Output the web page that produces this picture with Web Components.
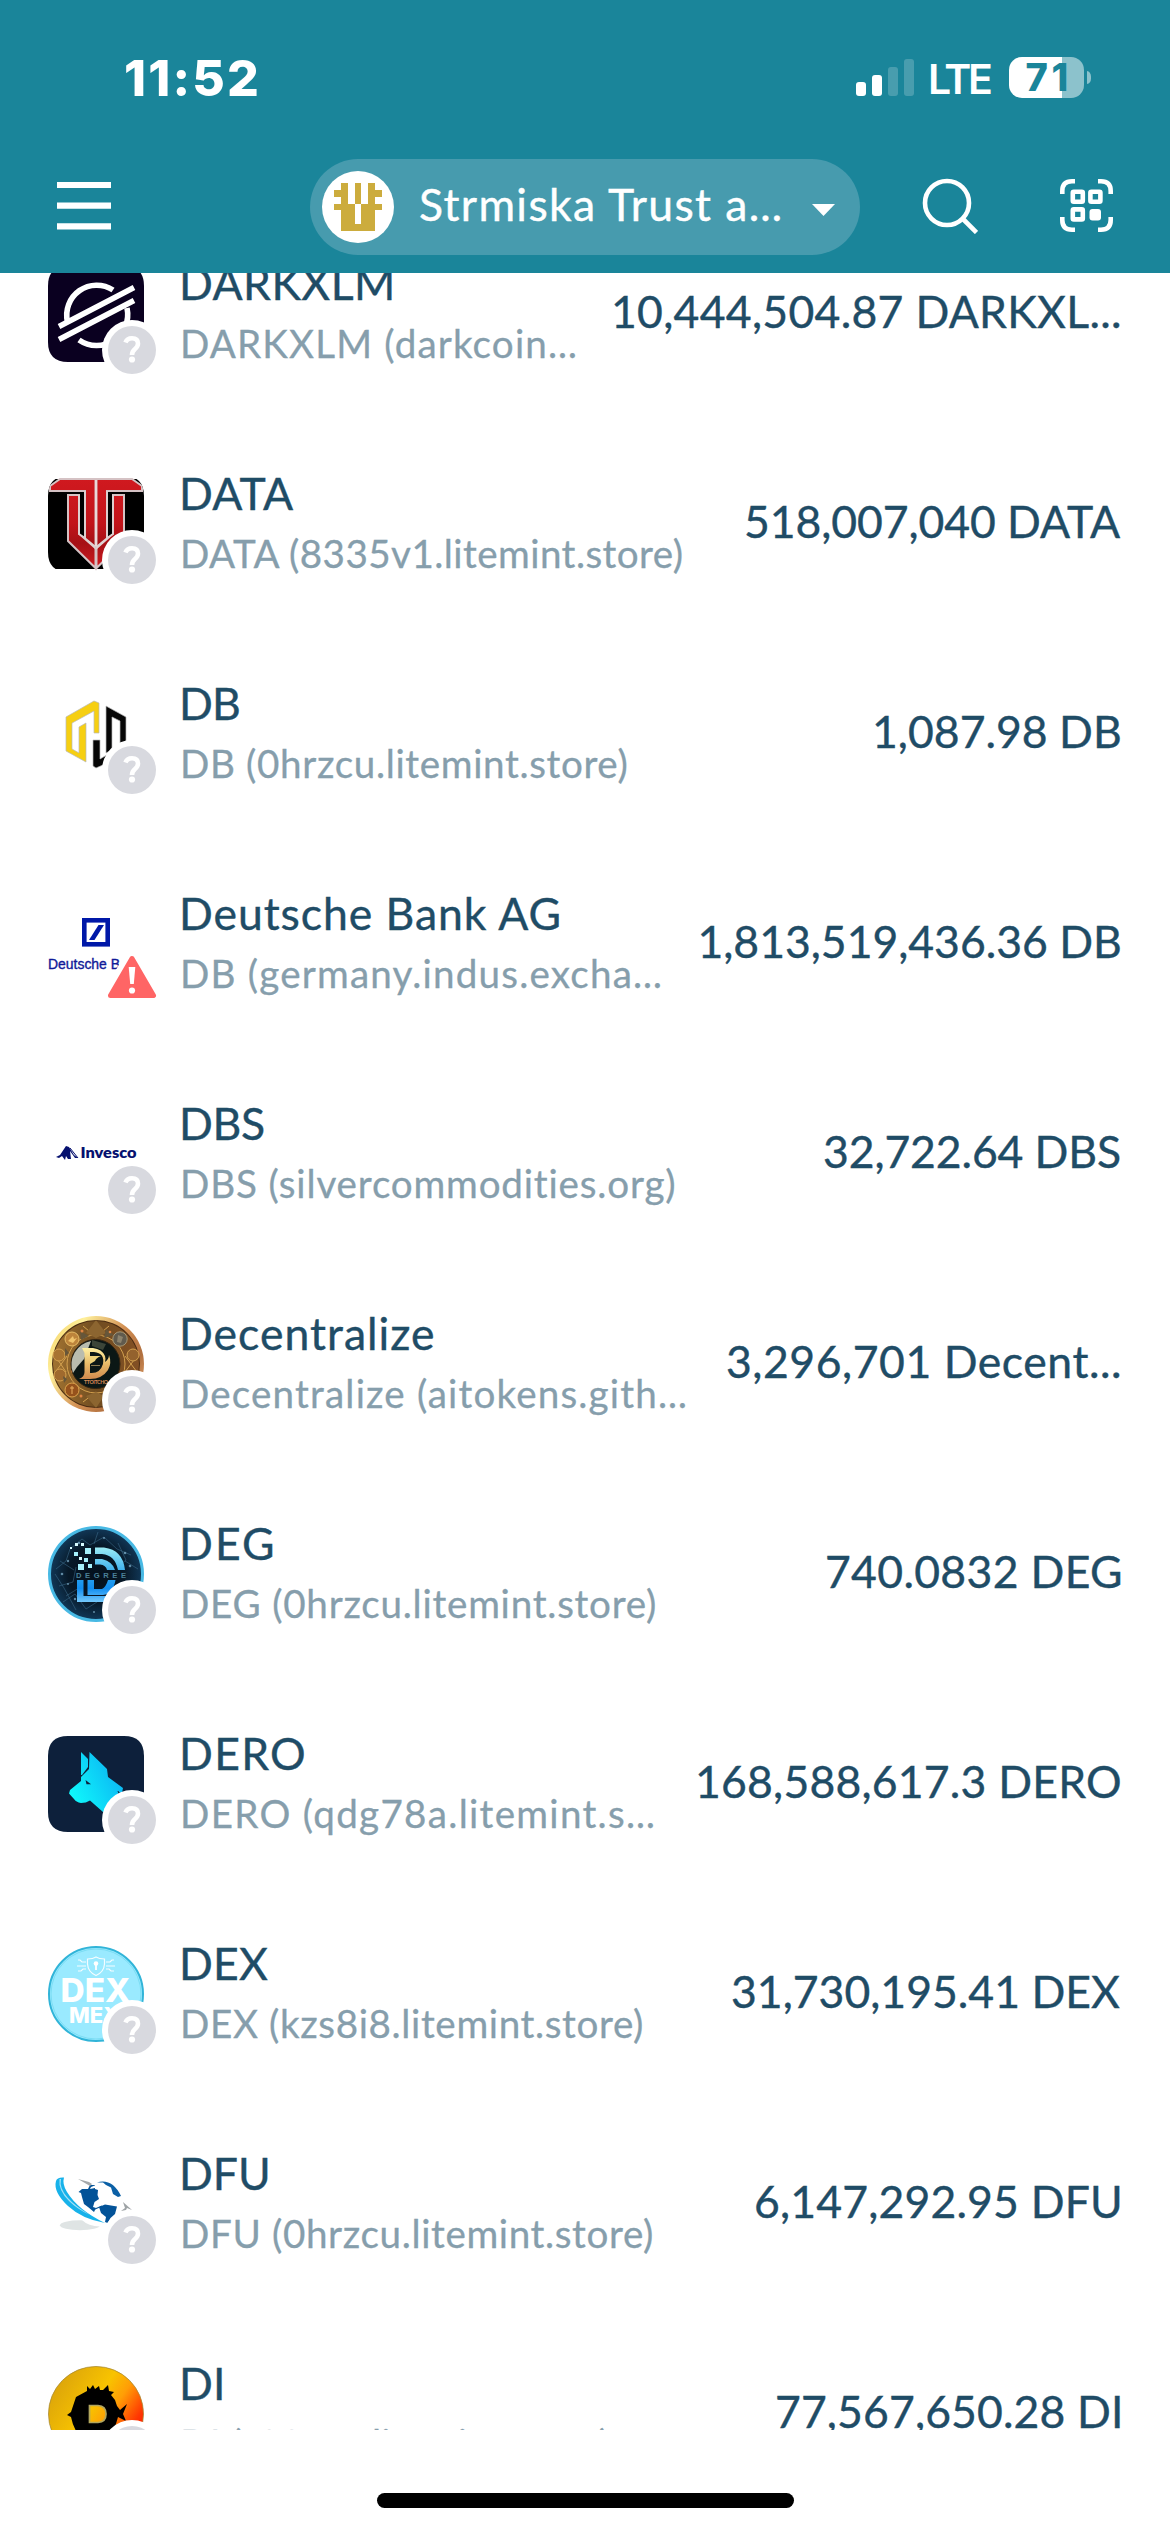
<!DOCTYPE html>
<html lang="en">
<head>
<meta charset="utf-8">
<title>Wallet assets</title>
<style>
html,body{margin:0;padding:0;background:#fff}
body{width:1170px;height:2532px;overflow:hidden;font-family:Lato,"Noto Sans",sans-serif;color:#1f4c66}
</style>
</head>
<body>
<wallet-screen></wallet-screen>
<script>
const define=(name,html,init)=>{
  const t=document.createElement('template');t.innerHTML=html;
  customElements.define(name,class extends HTMLElement{
    constructor(){super();this.attachShadow({mode:'open'})}
    connectedCallback(){
      if(this.ready)return;this.ready=true;
      this.shadowRoot.append(t.content.cloneNode(true));
      if(init)init.call(this,this.shadowRoot);
    }
  });
};

/* A single line whose visible ink spans exactly `ink` pixels */
const pen=document.createElement('canvas').getContext('2d');
define('fit-text','<style>:host{display:block;white-space:pre;flex:none}</style><slot></slot>',function(){
  const s=getComputedStyle(this),text=this.textContent,ink=+this.getAttribute('ink');
  pen.font=`${s.fontWeight} ${s.fontSize} ${s.fontFamily}`;
  const m=pen.measureText(text);
  const w=m.actualBoundingBoxRight+m.actualBoundingBoxLeft;
  const ls=(ink-w)/(text.length-1);
  this.style.letterSpacing=ls+'px';
  this.style.marginLeft=m.actualBoundingBoxLeft+'px';
  this.style.marginRight=-(m.width-m.actualBoundingBoxRight+ls)+'px';
});

define('status-bar',`<style>
:host{display:flex;height:159px;color:#fff;font-family:Inter,sans-serif;box-sizing:border-box;padding:0 79px 0 126px;justify-content:space-between}
.time{font-size:50px;font-weight:800;line-height:156px}
.right{display:flex;align-items:flex-start}
.bars{display:block;margin:59px 17px 0 0}
.net{display:flex;margin-right:18px}
.lte{font-size:41px;font-weight:600;line-height:158px}
.bat{display:flex;align-items:center;margin-top:57px}
.cell{width:75px;height:41px;border-radius:13px;background:linear-gradient(90deg,#fff 53px,#8cc2cc 53px);display:flex;justify-content:center}
.cell fit-text{font-size:38px;font-weight:800;line-height:41px;color:#1a859a}
.nub{width:4px;height:13px;margin-left:3px;border-radius:0 5px 5px 0/0 7px 7px 0;background:#8cc2cc}
</style>
<fit-text class="time" ink="131">11:52</fit-text>
<div class="right">
<svg class="bars" width="58" height="37" fill="#fff"><rect y="23" width="10" height="14" rx="3"/><rect x="16" y="16" width="10" height="21" rx="3"/><g opacity=".2"><rect x="32" y="8" width="10" height="29" rx="3"/><rect x="48" width="10" height="37" rx="3"/></g></svg>
<div class="net"><fit-text class="lte" ink="60">LTE</fit-text></div>
<div class="bat"><div class="cell"><fit-text ink="40">71</fit-text></div><div class="nub"></div></div>
</div>`);

define('account-pill',`<style>
:host{display:flex;align-items:center;width:550px;height:96px;border-radius:48px;background:#479bae;box-sizing:border-box;padding:0 25px 0 12px}
.face{width:72px;height:72px;border-radius:50%;background:#fff;display:flex;align-items:center;justify-content:center;margin-right:26px}
fit-text{font-size:44.5px;line-height:88px;margin-bottom:6px;color:#fff;-webkit-text-stroke:.4px #fff}
.arrow{margin-left:auto;margin-top:5px}
</style>
<div class="face"><svg width="48" height="48" viewBox="0 0 7 7" fill="#ccac3d" shape-rendering="crispEdges"><path d="M1 0h1v3h1v3h1V3H1V0zM1 0h1v3h1v0H1zM4 3h1V0h1v1h1v1H6v1h1v1H6v3H1V4H0V3h1V2H0V1h1V3h2v3h1zM3 0h1v3H3z" fill="none"/><path d="M1 0h1v3h1v3h1V3h1V0h1v1h1v1H6v1h1v1H6v3H1V4H0V3h1V2H0V1h1zM3 0h1v3H3z"/></svg></div>
<fit-text ink="361">Strmiska Trust a…</fit-text>
<svg class="arrow" width="23" height="12"><path d="M0 0h23L11.5 12z" fill="#fff"/></svg>`);

define('nav-bar',`<style>
:host{display:flex;align-items:flex-start;height:114px;box-sizing:border-box;padding-left:57px}
svg{fill:none;stroke:#fff;flex:none}
.menu{margin:22px 199px 0 0}.find{margin:19px 0 0 62px}.scan{margin:20px 0 0 82px}
</style>
<svg class="menu" width="54" height="50" stroke-width="6.2"><path d="M0 4h54M0 24.7h54M0 45.3h54"/></svg>
<account-pill></account-pill>
<svg class="find" width="56" height="56" stroke-width="4.6"><circle cx="25" cy="25" r="22"/><path d="M40.500 40.500L54.500 54.500"/></svg>
<svg class="scan" width="53" height="53" stroke-width="4.6"><path d="M2.300 15V12Q2.300 2.300 12 2.300h3M38 2.300h3Q50.700 2.300 50.700 12v3M50.700 38v3Q50.700 50.700 41 50.700h-3M15 50.700h-3Q2.300 50.700 2.300 41v-3"/><rect x="12.800" y="12.800" width="10" height="10" rx="1"/><rect x="30.400" y="12.800" width="10" height="10" rx="1"/><rect x="12.800" y="30.400" width="10" height="10" rx="1"/><rect x="29.500" y="30" width="11.500" height="11.500" rx="3" fill="#fff" stroke="none"/></svg>`);

const logos={
xlm:`<g clip-path="url(#sq)"><rect width="96" height="96" fill="#0a0020"/><g fill="none" stroke="#fff" stroke-width="5.600"><path d="M65 24A30 30 0 0 0 19.500 56"/><path d="M79 42A31 31 0 0 1 31 74"/><path d="M11 60.500L86 21.500M11 73.500L86 34.500"/></g></g>`,
tt:`<g clip-path="url(#sq)"><rect y="3" width="96" height="90" fill="#000"/><path d="M2 10L12 3H47.500V92L20 65V19H31V58L37 62V15H2z" fill="url(#red)" stroke="#d5c2c4" stroke-width="2"/><path d="M31 19V58L48 73M37 15V62L48 71" fill="none" stroke="#dfd2d2" stroke-width="1.600"/><path d="M94 10L84 3H48.500V92L76 65V19H65V58L59 62V15H94z" fill="url(#red)" stroke="#d5c2c4" stroke-width="2"/><path d="M65 19V58L48 73M59 15V62L48 71" fill="none" stroke="#dfd2d2" stroke-width="1.600"/><path d="M48 4V70" stroke="#ead9d9" stroke-width="2"/></g>`,
hex:`<g stroke="#b9b9b9" stroke-width=".7"><path d="M18 31L46 15L51 17V47H46V25L24 37V63L31 67V41L38 37V76L18 65z" fill="#f6cf12"/><path d="M58 20L78 31V58H72V35L64 31V64L58 67z" fill="#070707"/><path d="M45 54H52V73L64 66V75L48 82L45 80z" fill="#070707"/></g>`,
db:`<rect x="36.300" y="24.300" width="23.400" height="24" fill="none" stroke="#0018a8" stroke-width="4.600"/><path d="M41 44h5.500L56 29h-5.500z" fill="#0018a8"/><text x="0" y="73.300" font-family="Liberation Sans,sans-serif" font-size="13.800" fill="#101a98" stroke="#101a98" stroke-width=".35" textLength="72" lengthAdjust="spacingAndGlyphs">Deutsche B</text>`,
inv:`<path d="M8 51L12 49L18 40L21 41L26 49L30 52L27 52L22 45L23 53H20L18 50L17 54L14 50L11 52z" fill="#06116f"/><path d="M22 42L30 52" stroke="#06116f" stroke-width="1"/><text x="32.500" y="51.700" font-family="Lato,sans-serif" font-weight="800" font-size="15.500" fill="#06116f" textLength="56" lengthAdjust="spacingAndGlyphs">Invesco</text>`,
coin:`<circle cx="48" cy="48" r="48" fill="url(#gold)"/><circle cx="48" cy="48" r="44" fill="#4b2c12"/><circle cx="48" cy="48" r="43" fill="url(#bronze)"/><g fill="none" stroke="#d4a14f" stroke-width="1"><path d="M6 38l12 18M6 58l13-18M77 40l12 16M89 40L77 56M35 10l13 11L61 10M35 86l13-10 12 10"/><circle cx="11" cy="39" r="6" fill="#a87431"/><circle cx="12" cy="59" r="6" fill="#a06a2e"/><circle cx="85" cy="39" r="6" fill="#94622e"/><circle cx="48" cy="48" r="29"/></g><path d="M38 17L48 4L58 17L48 22zM38 80L48 92L56 80L48 76z" fill="#8c6530"/><path d="M32 15l9 5-8 4zM58 13l8 6-10 3zM17 32l4 5-4 3zM15 60l4 3-3 4z" fill="#66563a"/><g fill="#df8443"><circle cx="34" cy="15" r="1.500"/><circle cx="25" cy="55" r="2"/><circle cx="62" cy="16" r="1.300"/><circle cx="33" cy="80" r="1.500"/></g><circle cx="24" cy="23" r="7" fill="#bd843b" stroke="#e6bc66"/><path d="M20 25l5-5 1 3 3-1-4 5z" fill="#efc36c"/><circle cx="72" cy="23" r="7.200" fill="#615b4e" stroke="#a69776"/><path d="M69 26l1-7 5 2-2 6z" fill="#8d836d"/><circle cx="24" cy="74" r="7" fill="#96521c" stroke="#dda34d"/><path d="M24 70v8M22 72h4" stroke="#e9ae5e"/><circle cx="47.500" cy="48" r="24.500" fill="#0b1715" stroke="#322312"/><path d="M25 57A24 24 0 0 1 43 25L36 43L29 51z" fill="#b9bcae"/><path d="M44 24L58 28L55 34L44 30z" fill="#3b4538"/><path fill-rule="evenodd" d="M34 32H45Q54 33 57 40Q58 43 57 46Q61 43 61 39Q64 47 60 54Q54 63 42 63H31Q36.500 61 36.500 56V37zM42 36V57Q52 58 55 48Q57 37 46 36z" fill="url(#letter)"/><path d="M42 40H53Q48 42 47 45L42 48z" fill="#eed27a"/><path d="M43 49.500h9" stroke="#8b7a50" stroke-width="1"/><text x="36" y="68" font-family="Lato,sans-serif" font-size="5.200" font-weight="700" fill="#d58b58" textLength="24">TTOITCHO</text>`,
deg:`<circle cx="48" cy="48" r="46.500" fill="url(#navy)" stroke="#48b9e4" stroke-width="3"/><g stroke="#467b9c" stroke-width=".7" opacity=".65" fill="none"><path d="M8 43l10-8 4-12 12-10 8 6 14-8 13 12 14 6M11 60l14-4 3-15M15 76l12-8 11 15 11-7M70 17l8 17-8 7M7 48l9 14 12 22M50 6l-4 12M77 35l13 8M12 35l14 9M18 70l13-8"/></g><g fill="#83b4d0" opacity=".7"><circle cx="20" cy="35" r="1.200"/><circle cx="14" cy="48" r="1.300"/><circle cx="20" cy="58" r="1"/><circle cx="31" cy="17" r="1.200"/><circle cx="56" cy="12" r="1"/><circle cx="77" cy="27" r="1.300"/><circle cx="82" cy="40" r="1.300"/><circle cx="27" cy="73" r="1.200"/><circle cx="46" cy="86" r="1"/></g><g fill="url(#ice)"><path d="M47 21.500H56Q75 24 77 44H70Q67 29 54 28H47zM47 33H54Q65 36 67 44H59Q58 39 52 38.500H47zM29 54H35.500V70H60V76H29zM39.500 54H46V63H54Q58 61 60 54H67.500Q65 68 55 69H39.500z"/><path d="M37 22h6v6h-6zM26 26h4v4h-4zM36 32h4v4h-4zM30 38h6v6h-6zM40 38h4v4h-4z" fill="#a5f0fb"/><path d="M27 17h3v3h-3zM33 17h3v3h-3zM22 21h2v2h-2zM31 31h3v3h-3z" fill="#d9fbff"/></g><text x="28" y="52" font-family="Liberation Sans,sans-serif" font-size="7.600" font-weight="700" fill="#4b8198" textLength="50">DEGREE</text>`,
dero:`<g clip-path="url(#sq)"><rect width="96" height="96" fill="#0d203b"/><g fill="url(#cyan)"><path d="M33 16L40 23V31L34 39H33z"/><path d="M41.500 16L59 33L60 41L75 52L74 57L71 56L73 61L66 62L70 76H55L42 64.500Q38 67 33 67Q28 66 26 63L21 57.500L22 54L33 45V41L41 33z"/></g><path d="M37.500 44L43 48.300H38.500z" fill="#0d203b"/><path d="M70 55L72 60" stroke="#0d203b"/></g>`,
dex:`<circle cx="48" cy="48" r="47" fill="#9aeaff" stroke="#31b4d8" stroke-width="2"/><circle cx="48" cy="48" r="45" fill="none" stroke="#7addf4"/><g font-family="Inter,sans-serif" font-weight="800" fill="#fff"><text x="12.500" y="56" font-size="32.500" textLength="70" lengthAdjust="spacingAndGlyphs">DEX</text><text x="21" y="77" font-size="21.500" textLength="51" lengthAdjust="spacingAndGlyphs">MEX</text></g><g fill="none" stroke="#fff" stroke-width="1.200" opacity=".9"><path d="M39.500 13Q45 13 48 11Q51 13 56.500 13V18Q56 26 48 29.500Q40 26 39.500 18z"/><path d="M38 16h-4l-2-2h-2M38 20h-9M38 23h-3l-2 2h-3M58 16h4l2-2h2M58 20h9M58 23h3l2 2h3"/><path d="M48 17v7" stroke-width="2"/></g><circle cx="48" cy="17.500" r="2.300" fill="#fff"/>`,
dfu:`<ellipse cx="32" cy="69.300" rx="20" ry="5" fill="#dfe4e4"/><path d="M34 64Q42 72 58 70V62z" fill="#fff"/><path d="M8 25Q9 21 16 21.500Q14 28 19 36Q30 54 57 67Q34 63 20 50Q5 36 8 25z" fill="#17b2ea"/><path d="M11.500 23Q10 34 21 45Q29 53 41 58.500Q27 50 19.500 41.500Q11 32 13 23z" fill="#a3e1f7"/><path d="M30.500 36L34 33L40 33L42 29L47 29V33L50 34L49.500 39L51 43L46.500 46L45 51L48 52L46 56L40 51L36 48L34 41L33 37z" fill="#035398"/><path d="M43 31L48 29L47 32L42 33z" fill="#fff"/><path d="M51 51L57 48.500L63 49.500L69 50.500L67 58L62.500 62L59.500 67L57 66L58 61L53 57z" fill="#035398"/><path d="M49 26.500Q64 22 73 40L70 41L65 38L63 31.500L58 29L55 26.500z" fill="#0b60a6"/><path d="M47 53L54 50" stroke="#035398" stroke-width="1.300"/><path d="M30 23L41 26L44 28L42 30z" fill="#a4a8aa"/><path d="M75 46L84 54L79 52L78 54L73 55L77 52z" fill="#9ea3a6"/>`,
di:`<circle cx="48" cy="48" r="47.500" fill="url(#sun)" stroke="#a98a31" stroke-width=".8"/><path d="M19 49L23 46L28 31L39 25L39 20L42 23L45 19L47 23L51 20L52 24L55 24L60 19L61 25L66 26L63 29L67 34L69 40L72 44L79 38L75 48L78 55L70 51L65 68H30Q25 61 23 51z" fill="#000"/><path d="M41.500 39.500H50Q58 40 58 48Q58 56 50 56.500H41.500z" fill="url(#sun)" stroke="#b2a65e" stroke-width="1.700"/>`
};
const defs=`<defs><clipPath id="sq"><path d="M0 20Q0 0 20 0H76Q96 0 96 20V76Q96 96 76 96H20Q0 96 0 76z"/></clipPath>
<linearGradient id="red" x1="0" x2="0" y1="0" y2="1"><stop stop-color="#d0191f"/><stop offset=".5" stop-color="#c2141a"/><stop offset=".72" stop-color="#a61015"/><stop offset="1" stop-color="#cf1a20"/></linearGradient>
<linearGradient id="gold" x1="0" x2="1" y1="0.200" y2=".8"><stop stop-color="#f5d56d"/><stop offset=".2" stop-color="#fff09b"/><stop offset=".55" stop-color="#d28f53"/><stop offset=".8" stop-color="#b06f3f"/><stop offset="1" stop-color="#e2a369"/></linearGradient>
<linearGradient id="letter" x1="0" x2="0" y1="0" y2="1"><stop stop-color="#fff0a2"/><stop offset=".5" stop-color="#e8bc69"/><stop offset="1" stop-color="#cf8a4e"/></linearGradient>
<linearGradient id="bronze" x1="0" x2="1"><stop stop-color="#a17331"/><stop offset=".5" stop-color="#704c20"/><stop offset="1" stop-color="#835024"/></linearGradient>
<radialGradient id="navy"><stop stop-color="#04101d"/><stop offset=".6" stop-color="#071827"/><stop offset="1" stop-color="#113858"/></radialGradient>
<linearGradient id="ice" x1="0" x2="0" y1="0" y2="1"><stop stop-color="#9cecf5"/><stop offset=".5" stop-color="#2da6ed"/><stop offset=".75" stop-color="#128ef0"/><stop offset="1" stop-color="#73c8fb"/></linearGradient>
<linearGradient id="cyan" gradientUnits="userSpaceOnUse" x1="25" y1="60" x2="68" y2="38"><stop stop-color="#0ff6fb"/><stop offset="1" stop-color="#0cbbf4"/></linearGradient>
<linearGradient id="sun" gradientUnits="userSpaceOnUse" x1="14" y1="12" x2="94" y2="66"><stop stop-color="#dda60a"/><stop offset=".42" stop-color="#f8c300"/><stop offset=".62" stop-color="#ff9e06"/><stop offset=".88" stop-color="#ff3502"/><stop offset="1" stop-color="#ff1d00"/></linearGradient></defs>`;
const badges={
q:`<circle cx="84" cy="84" r="30" fill="#fff"/><circle cx="84" cy="84" r="24" fill="#d8d9df"/><path d="M77.500 76.500Q79 72.200 84 72.200Q90 72.200 90 77.500Q90 80.500 87 83Q84 85.500 84 89" fill="none" stroke="#fff" stroke-width="4.600"/><circle cx="84" cy="93.500" r="3.100" fill="#fff"/>`,
w:`<path d="M84 63L105 99.500H63z" fill="#fff" stroke="#fff" stroke-width="17" stroke-linejoin="round"/><path d="M84 62.500L105.500 99.500H62.500z" fill="#ff6565" stroke="#ff6565" stroke-width="5" stroke-linejoin="round"/><path d="M80.700 71h6.600l-1.500 17h-3.600z" fill="#fff"/><circle cx="84" cy="94.500" r="3.100" fill="#fff"/>`
};
define('asset-logo','<style>:host{display:block;width:96px;height:96px;flex:none}svg{display:block;overflow:visible}</style>',function(root){
  const box=document.createElement('div');
  box.innerHTML=`<svg width="96" height="96" viewBox="0 0 96 96">${defs}${logos[this.getAttribute('kind')]}${badges[this.getAttribute('badge')||'q']}</svg>`;
  root.append(box);
});

define('asset-row',`<style>
:host{display:flex;align-items:flex-start;height:210px;box-sizing:border-box;padding:0 50px 0 48px}
.label{flex:1;min-width:0;margin-left:39px;display:flex;flex-direction:column;align-items:flex-start}
.name{font-size:44.5px;line-height:54px;margin-top:-10px}
.sub{font-size:38.6px;line-height:66px;color:#869eac;-webkit-text-stroke:.3px #869eac}
.amount{font-size:44.5px;line-height:90px}
.name,.amount{-webkit-text-stroke:.4px #1f4c66}
</style>`,function(root){
  const a=n=>this.getAttribute(n),b=document.createElement('template');
  b.innerHTML=`<asset-logo kind="${a('kind')}" badge="${a('badge')||'q'}"></asset-logo>
  <div class="label"><fit-text class="name" ink="${a('nw')}">${a('name')}</fit-text><fit-text class="sub" ink="${a('sw')}">${a('sub')}</fit-text></div>
  <fit-text class="amount" ink="${a('aw')}">${a('amount')}</fit-text>`;
  root.append(b.content);
});

const assets=[
['xlm','DARKXLM',209,'DARKXLM (darkcoin…',392,'10,444,504.87 DARKXL...',506],
['tt','DATA',110,'DATA (8335v1.litemint.store)',500,'518,007,040 DATA',374],
['hex','DB',56,'DB (0hrzcu.litemint.store)',443.500,'1,087.98 DB',245],
['db','Deutsche Bank AG',377,'DB (germany.indus.excha…',477,'1,813,519,436.36 DB',419.500,'w'],
['inv','DBS',81,'DBS (silvercommodities.org)',492,'32,722.64 DBS',296],
['coin','Decentralize',250,'Decentralize (aitokens.gith…',502,'3,296,701 Decent...',393],
['deg','DEG',89,'DEG (0hrzcu.litemint.store)',472,'740.0832 DEG',293],
['dero','DERO',121,'DERO (qdg78a.litemint.s…',470,'168,588,617.3 DERO',422],
['dex','DEX',85,'DEX (kzs8i8.litemint.store)',459,'31,730,195.41 DEX',388],
['dfu','DFU',85,'DFU (0hrzcu.litemint.store)',469,'6,147,292.95 DFU',364],
['di','DI',39,'DI (s00xcu.litemint.store)',425,'77,567,650.28 DI',343]
];
define('asset-list',`<style>:host{display:flow-root;height:2157px;overflow:hidden}.rows{margin-top:-7px;display:flex;flex-direction:column}asset-row{flex:none}</style><div class="rows"></div>`,function(root){
  root.querySelector('.rows').innerHTML=assets.map(r=>`<asset-row kind="${r[0]}" name="${r[1]}" nw="${r[2]}" sub="${r[3]}" sw="${r[4]}" amount="${r[5]}" aw="${r[6]}" badge="${r[7]||'q'}"></asset-row>`).join('');
});

define('wallet-screen',`<style>
:host{display:flex;flex-direction:column;width:1170px;height:2532px;background:#fff}
header{background:#1a859a;height:273px;flex:none}
asset-list{flex:none}
footer{flex:1;display:flex;justify-content:center;align-items:flex-start;padding-top:63px}
.home{width:417px;height:15px;border-radius:8px;background:#000}
</style>
<header><status-bar></status-bar><nav-bar></nav-bar></header>
<asset-list></asset-list>
<footer><div class="home"></div></footer>`);
</script>
</body>
</html>
